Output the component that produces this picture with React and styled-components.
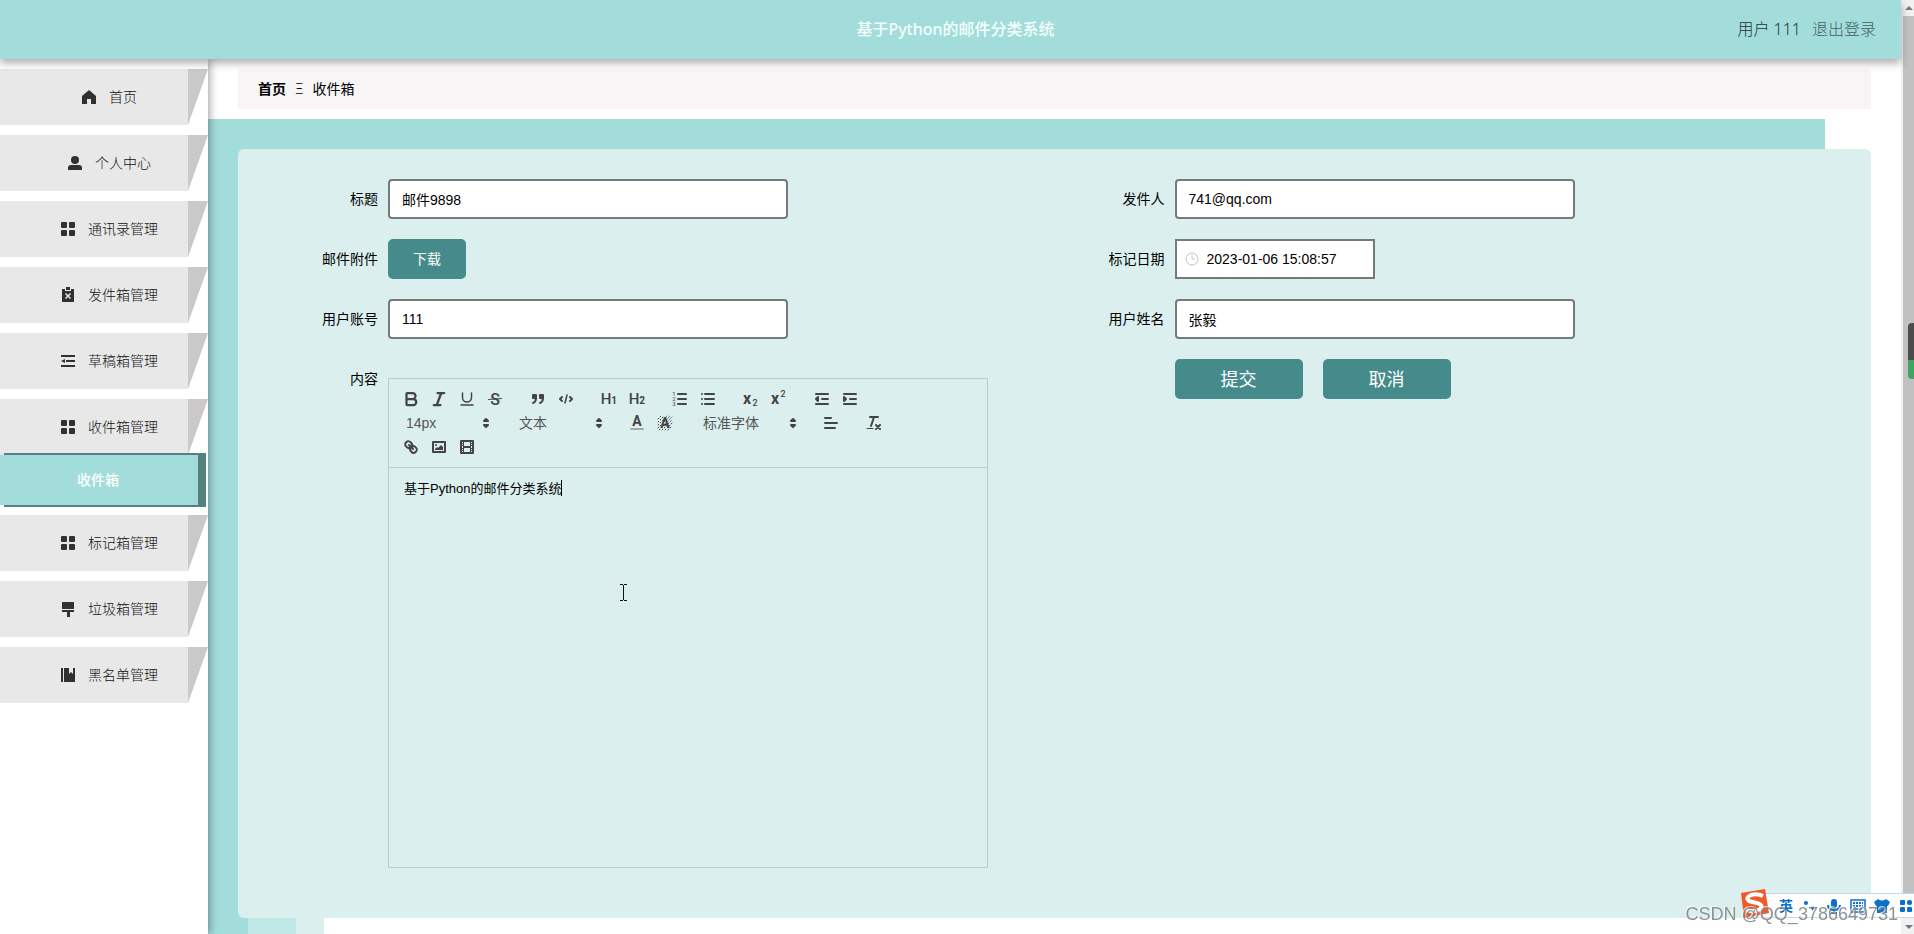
import styled, { createGlobalStyle, css } from "styled-components";
import { Bold, Italic, Underline } from "lucide-react";

const GlobalStyle = createGlobalStyle`
  * {
    box-sizing: border-box;
  }

  body {
    margin: 0;
    background: #fff;
    color: #000;
    font-family: "Noto Sans", "Noto Sans CJK SC", sans-serif;
    font-size: 14px;
    overflow: hidden;
  }

  button, input, select, textarea {
    font-family: "Liberation Sans", "Noto Sans CJK SC", sans-serif;
    font-size: 14px;
    color: #000;
  }
`;

const Page = styled.div`
  display: flex;
  min-height: 100vh;
`;

const Shell = styled.div`
  flex: 1;
  min-width: 0;
  display: flex;
  flex-direction: column;
`;

/* header */

const Header = styled.header`
  position: relative;
  z-index: 2;
  display: grid;
  grid-template-columns: 1fr auto 1fr;
  align-items: center;
  height: 59px;
  padding: 0 25px 3px;
  background: #a3dddb;
  box-shadow: 0 4px 8px rgba(60, 40, 50, 0.4);
`;

const Title = styled.h1`
  grid-column: 2;
  margin: 0;
  padding-left: 10px;
  font-size: 16px;
  font-weight: 500;
  color: #f4fffe;
`;

const UserBox = styled.div`
  display: flex;
  justify-content: flex-end;
  gap: 11px;
  font-size: 16px;
  font-weight: 300;
  color: #1d3332;
`;

const Logout = styled.a`
  color: #3f6061;
  text-decoration: none;
`;

/* sidebar */

const Body = styled.div`
  flex: 1;
  display: flex;
`;

const Sidebar = styled.nav`
  position: relative;
  z-index: 1;
  width: 208px;
  padding-top: 10px;
  background: #fff;
  box-shadow: 2px 0 8px rgba(0, 0, 0, 0.35);
`;

const Menu = styled.ul`
  display: flex;
  flex-direction: column;
  gap: 10px;
  margin: 0;
  padding: 0;
  list-style: none;
`;

const MenuLink = styled.a`
  display: flex;
  height: 56px;
  font-weight: 300;
  color: #111;
  text-decoration: none;

  &::after {
    content: "";
    width: 20px;
    background: #cac8c9;
    clip-path: polygon(0 0, 100% 0, 0 100%);
  }
`;

const MenuLabel = styled.span`
  flex: 1;
  display: flex;
  align-items: center;
  justify-content: center;
  gap: 11px;
  padding: 0 0 2px 29px;
  background: #e8e8e8;

  svg {
    width: 18px;
    height: 18px;
    margin-top: 2px;
    fill: #303133;
  }
`;

const SubLink = styled.a`
  position: relative;
  display: block;
  margin-right: 10px;
  padding-right: 2px;
  line-height: 50px;
  text-align: center;
  font-weight: 500;
  color: #fff;
  background: #a3dddb;
  box-shadow: 6px 0 0 2px #53837f;
  text-decoration: none;
`;

/* main */

const Main = styled.main`
  flex: 1;
  min-width: 0;
  display: flex;
  flex-direction: column;
  padding-top: 10px;
`;

const Breadcrumb = styled.div`
  display: flex;
  align-items: center;
  gap: 9px;
  height: 40px;
  margin: 0 30px 10px;
  padding: 0 20px 2px;
  background: #f7f5f6;

  a {
    color: #000;
    font-weight: 700;
    text-decoration: none;
  }
`;

const Separator = styled.span`
  font-weight: 300;
`;

const Stage = styled.div`
  padding: 30px 30px 0;
  background: linear-gradient(#a3dddb, #a3dddb) no-repeat left top / calc(100% - 76px) 100%;
`;

const Panel = styled.form`
  display: grid;
  grid-template-columns: 1fr 1fr;
  row-gap: 20px;
  align-items: start;
  padding: 30px 30px 50px;
  background: #dbf0ee;
  border-radius: 6px;
`;

const Stripes = styled.div`
  flex: 1;
  display: flex;
`;

const Stripe = styled.div`
  width: ${(props) => props.$width}px;
  background: ${(props) => props.$color};
`;

const Field = styled.div`
  display: flex;
  min-width: 0;
  padding-top: ${(props) => (props.$tall ? 19 : 0)}px;
`;

const labelStyles = css`
  flex: none;
  width: 120px;
  padding-right: 10px;
  line-height: ${(props) => (props.$short ? 2 : 40)}px;
  text-align: right;
`;

const Label = styled.label`
  ${labelStyles}
`;

const LabelText = styled.span`
  ${labelStyles}
`;

const Input = styled.input`
  width: 400px;
  height: 40px;
  padding: 0 12px;
  background: #fff;
  border: 2px solid #757b7b;
  border-radius: 4px;
  outline: none;
`;

const DateBox = styled.div`
  display: flex;
  align-items: center;
  gap: 6px;
  width: 200px;
  height: 40px;
  padding: 0 8px;
  background: #fff;
  border: 2px solid #757b7b;

  svg {
    flex: none;
    width: 14px;
    height: 14px;
    fill: none;
    stroke: #c0c4cc;
  }

  input {
    width: 100%;
    padding: 0 2px;
    border: none;
    outline: none;
    background: none;
  }
`;

const Button = styled.button`
  width: ${(props) => (props.$large ? 128 : 78)}px;
  height: 40px;
  padding: 0 0 2px;
  border: none;
  border-radius: 5px;
  background: #468b8b;
  color: #fff;
  font-size: ${(props) => (props.$large ? 18 : 14)}px;
`;

const Actions = styled.div`
  display: flex;
  gap: 20px;
  padding-left: 120px;
`;

/* rich text editor */

const Editor = styled.div`
  position: relative;
  width: 600px;
  border: 1px solid #b9cecc;
`;

const Toolbar = styled.div`
  display: flex;
  flex-wrap: wrap;
  padding: 8px;
  border-bottom: 1px solid #b9cecc;
`;

const Group = styled.div`
  display: flex;
  margin-right: 15px;
`;

const Tool = styled.button`
  width: 28px;
  height: 24px;
  padding: 3px 5px;
  border: none;
  background: none;

  svg {
    display: block;
    width: 18px;
    height: 18px;
    overflow: visible;
  }
`;

const Picker = styled.div`
  position: relative;
  width: ${(props) => props.$width}px;
  height: 24px;

  select {
    width: 100%;
    height: 24px;
    padding: 0 9px;
    border: none;
    outline: none;
    background: none;
    appearance: none;
    color: #555;
  }

  svg {
    position: absolute;
    top: 3px;
    right: 0;
    width: 18px;
    height: 18px;
    pointer-events: none;
  }
`;

const TextArea = styled.textarea`
  display: block;
  width: 100%;
  height: 399px;
  padding: 12px 15px;
  border: none;
  outline: none;
  resize: none;
  background: none;
  font-size: 13px;
  line-height: 18px;
`;

const Caret = styled.span`
  position: absolute;
  top: 101px;
  left: 172px;
  width: 1px;
  height: 16px;
  background: #000;
`;

const Pointer = styled.svg`
  position: absolute;
  top: 205px;
  left: 230px;
  width: 9px;
  height: 17px;
  fill: none;
  stroke: #111;
`;

/* scrollbar */

const ScrollTrack = styled.div`
  display: flex;
  flex-direction: column;
  align-items: flex-end;
  width: 13px;
  height: 100vh;
  background: #f1f1f1;

  svg {
    flex: none;
    width: 11px;
    height: 16px;
    fill: #777;
  }
`;

const Thumb = styled.div`
  flex: 1;
  width: 11px;
  background: #c1c1c1;
`;

const Gauge = styled.div`
  position: fixed;
  top: 323px;
  right: 0;
  width: 6px;
  height: 56px;
  border-radius: 4px 0 0 4px;
  background: linear-gradient(#4c4c4c 66%, #3fa564 66%);
`;

/* input method bar */

const ImeBar = styled.div`
  position: fixed;
  right: -4px;
  bottom: 16px;
  display: flex;
  align-items: center;
  height: 25px;
  padding-left: 12px;
  background: #fff;
  border: solid #bfd9ee;
  border-width: 1px 0;
  color: #0b6fce;
  font-size: 14px;
  font-weight: 700;

  span,
  svg {
    width: 24px;
    text-align: center;
  }

  span {
    padding-bottom: 2px;
  }

  svg {
    height: 16px;
    fill: #0b6fce;
  }
`;

const ImeLogo = styled.svg`
  position: fixed;
  right: 144px;
  bottom: 15px;
  width: 31px;
  height: 31px;
`;

const Watermark = styled.div`
  position: fixed;
  right: 16px;
  bottom: 9px;
  font-family: "Liberation Sans", sans-serif;
  font-size: 18px;
  line-height: 22px;
  color: rgba(130, 135, 135, 0.9);
  text-shadow: -1px -1px 0 rgba(255, 255, 255, 0.7);
`;

const icons = {
  home: <path d="M9 2 16 8v8h-5v-5H7v5H2V8z" />,
  user: (
    <>
      <circle cx="9" cy="6" r="4" />
      <path d="M2 16v-2q0-3 3-3h8q3 0 3 3v2z" />
    </>
  ),
  grid: (
    <>
      <rect x="2" y="2" width="6" height="6" rx="1" />
      <rect x="10" y="2" width="6" height="6" rx="1" />
      <rect x="2" y="10" width="6" height="6" rx="1" />
      <rect x="10" y="10" width="6" height="6" rx="1" />
    </>
  ),
  clipboard: (
    <>
      <path d="M3 3h3v2h6V3h3v13H3z" />
      <path d="M7 1h4v3H7z" />
      <path d="m6.500 7.500 5 5m0-5-5 5" stroke="#e8e8e8" strokeWidth="1.500" />
    </>
  ),
  fold: (
    <>
      <path d="M2 3h14v2H2zM7 8h9v2H7zM2 13h14v2H2z" />
      <path d="M2 9l4-2v4z" />
    </>
  ),
  brush: <path d="M3 2h12v7H3zM3 10h12v2h-4v5H8v-5H3z" />,
  notebook: <path d="M2 2h2v14H2zM5 2h5v6l2-2 2 2V2h2v14H5z" />,
};

const menu = [
  { name: "首页", icon: "home" },
  { name: "个人中心", icon: "user" },
  { name: "通讯录管理", icon: "grid" },
  { name: "发件箱管理", icon: "clipboard" },
  { name: "草稿箱管理", icon: "fold" },
  { name: "收件箱管理", icon: "grid", child: "收件箱" },
  { name: "标记箱管理", icon: "grid" },
  { name: "垃圾箱管理", icon: "brush" },
  { name: "黑名单管理", icon: "notebook" },
];

function Glyph({ children }) {
  return (
    <svg
      viewBox="0 0 18 18"
      fill="none"
      stroke="#444"
      strokeWidth="2"
      strokeLinecap="round"
      strokeLinejoin="round"
    >
      {children}
    </svg>
  );
}

function Letter({ x = 9, y = 14, size = 14, weight = 700, children }) {
  return (
    <text
      x={x}
      y={y}
      fontSize={size}
      fontWeight={weight}
      textAnchor="middle"
      fill="#444"
      stroke="none"
      fontFamily="Roboto, sans-serif"
    >
      {children}
    </text>
  );
}

function Select({ label, value, width }) {
  return (
    <Picker $width={width}>
      <select aria-label={label} defaultValue={value}>
        <option>{value}</option>
      </select>
      <Glyph>
        <path d="M7 11l2 2 2-2zM7 7l2-2 2 2z" />
      </Glyph>
    </Picker>
  );
}

function ToolButton({ label, children }) {
  return (
    <Tool type="button" aria-label={label}>
      {children}
    </Tool>
  );
}

function EditorToolbar() {
  return (
    <Toolbar>
      <Group>
        <ToolButton label="粗体">
          <Bold color="#444" strokeWidth={3} />
        </ToolButton>
        <ToolButton label="斜体">
          <Italic color="#444" strokeWidth={3} />
        </ToolButton>
        <ToolButton label="下划线">
          <Underline color="#444" strokeWidth={2} />
        </ToolButton>
        <ToolButton label="删除线">
          <Glyph>
            <Letter size={16} weight={500} y={15}>S</Letter>
            <path d="M2.500 9.500l13-1" strokeWidth="1" />
          </Glyph>
        </ToolButton>
      </Group>
      <Group>
        <ToolButton label="引用">
          <Glyph>
            <g fill="#444">
              <rect x="4" y="5" width="3" height="3" />
              <rect x="11" y="5" width="3" height="3" />
            </g>
            <path d="M7 8c0 4-3 5-3 5M14 8c0 4-3 5-3 5" />
          </Glyph>
        </ToolButton>
        <ToolButton label="代码">
          <Glyph>
            <path d="M5 7 3 9l2 2M13 7l2 2-2 2" />
            <path d="M10 5 8 13" strokeWidth="1.500" />
          </Glyph>
        </ToolButton>
      </Group>
      <Group>
        <ToolButton label="标题一">
          <Glyph>
            <Letter x={6} size={15} weight={500}>H</Letter>
            <Letter x={14} size={10}>1</Letter>
          </Glyph>
        </ToolButton>
        <ToolButton label="标题二">
          <Glyph>
            <Letter x={6} size={15} weight={500}>H</Letter>
            <Letter x={14} size={10}>2</Letter>
          </Glyph>
        </ToolButton>
      </Group>
      <Group>
        <ToolButton label="有序列表">
          <Glyph>
            <path d="M7 4h8M7 9h8M7 14h8" />
            <Letter x={3} y={6} size={6} weight={400}>1</Letter>
            <Letter x={3} y={11} size={6} weight={400}>2</Letter>
            <Letter x={3} y={16} size={6} weight={400}>3</Letter>
          </Glyph>
        </ToolButton>
        <ToolButton label="无序列表">
          <Glyph>
            <path d="M6 4h9M6 9h9M6 14h9M3 4h0M3 9h0M3 14h0" />
          </Glyph>
        </ToolButton>
      </Group>
      <Group>
        <ToolButton label="下标">
          <Glyph>
            <Letter x={5} y={14} size={16}>x</Letter>
            <Letter x={13} y={16} size={9} weight={500}>2</Letter>
          </Glyph>
        </ToolButton>
        <ToolButton label="上标">
          <Glyph>
            <Letter x={5} y={14} size={16}>x</Letter>
            <Letter x={13} y={7} size={9} weight={500}>2</Letter>
          </Glyph>
        </ToolButton>
      </Group>
      <Group>
        <ToolButton label="减少缩进">
          <Glyph>
            <path d="M3 4h12M9 9h6M3 14h12" />
            <path d="M5 7v4L3 9z" fill="#444" />
          </Glyph>
        </ToolButton>
        <ToolButton label="增加缩进">
          <Glyph>
            <path d="M3 4h12M9 9h6M3 14h12" />
            <path d="M3 7v4l2-2z" fill="#444" />
          </Glyph>
        </ToolButton>
      </Group>
      <Group>
        <Select label="字号" value="14px" width={98} />
      </Group>
      <Group>
        <Select label="段落" value="文本" width={98} />
      </Group>
      <Group>
        <ToolButton label="文字颜色">
          <Glyph>
            <Letter y={12} size={14}>A</Letter>
            <path d="M3 15h12" opacity="0.4" />
          </Glyph>
        </ToolButton>
        <ToolButton label="背景颜色">
          <Glyph>
            <path
              d="M2 5l3-3M2 8l6-6M2 11l9-9M2 14l12-12M3 16l13-13M6 16l10-10M9 16l7-7M12 16l4-4"
              strokeWidth="1"
              strokeDasharray="1 2"
            />
            <Letter y={14}>A</Letter>
          </Glyph>
        </ToolButton>
      </Group>
      <Group>
        <Select label="字体" value="标准字体" width={108} />
      </Group>
      <Group>
        <ToolButton label="对齐">
          <Glyph>
            <path d="M3 4h6M3 9h12M3 14h10" />
          </Glyph>
        </ToolButton>
      </Group>
      <Group>
        <ToolButton label="清除格式">
          <Glyph>
            <path d="M5 3h8M6 12l3-9M11 11l4 4M15 11l-4 4" />
            <path d="M2 14.500h6" strokeWidth="1" />
          </Glyph>
        </ToolButton>
      </Group>
      <Group>
        <ToolButton label="链接">
          <Glyph>
            <path d="M7 7l4 4" />
            <path d="M8.900 4.577a3.476 3.476 0 0 1 .36 4.679A3.476 3.476 0 0 1 4.577 8.900C3.185 7.500 2.035 6.400 4.217 4.217S7.500 3.185 8.900 4.577Z" />
            <path d="M13.423 9.100a3.476 3.476 0 0 0-4.679-.36 3.476 3.476 0 0 0 .36 4.679c1.392 1.392 2.500 2.542 4.679.36S14.815 10.500 13.423 9.100Z" />
          </Glyph>
        </ToolButton>
        <ToolButton label="图片">
          <Glyph>
            <rect x="3" y="4" width="12" height="10" />
            <g fill="#444" stroke="none">
              <circle cx="6" cy="7" r="1" />
              <path d="M5 12v-1l2-2 1 1 3-3 2 2v3z" />
            </g>
          </Glyph>
        </ToolButton>
        <ToolButton label="视频">
          <Glyph>
            <rect x="3" y="3" width="12" height="12" />
            <g fill="#444" stroke="none">
              <path d="M5 3h1v12H5zM12 3h1v12h-1zM5 8h8v2H5z" />
              <path d="M3 5h3v1H3zM3 7h3v1H3zM3 10h3v1H3zM3 12h3v1H3zM12 5h3v1h-3zM12 7h3v1h-3zM12 10h3v1h-3zM12 12h3v1h-3z" />
            </g>
          </Glyph>
        </ToolButton>
      </Group>
    </Toolbar>
  );
}

function TextField({ id, label, value }) {
  return (
    <Field>
      <Label htmlFor={id}>{label}</Label>
      <Input id={id} defaultValue={value} />
    </Field>
  );
}

function MailForm() {
  return (
    <Panel>
      <TextField id="subject" label="标题" value="邮件9898" />
      <TextField id="sender" label="发件人" value="741@qq.com" />
      <Field>
        <LabelText>邮件附件</LabelText>
        <Button type="button">下载</Button>
      </Field>
      <Field>
        <Label htmlFor="date">标记日期</Label>
        <DateBox>
          <svg viewBox="0 0 14 14">
            <circle cx="7" cy="7" r="6" />
            <path d="M7 3v4h3" />
          </svg>
          <input id="date" defaultValue="2023-01-06 15:08:57" />
        </DateBox>
      </Field>
      <TextField id="account" label="用户账号" value="111" />
      <TextField id="username" label="用户姓名" value="张毅" />
      <Field $tall>
        <Label htmlFor="content" $short>
          内容
        </Label>
        <Editor>
          <EditorToolbar />
          <TextArea id="content" defaultValue="基于Python的邮件分类系统" />
          <Caret />
          <Pointer viewBox="0 0 9 17">
            <path d="M1 .5h3M5 .5h3M4.500 1v15M1 16.500h3M5 16.500h3" />
          </Pointer>
        </Editor>
      </Field>
      <Actions>
        <Button type="button" $large>
          提交
        </Button>
        <Button type="button" $large>
          取消
        </Button>
      </Actions>
    </Panel>
  );
}

function Ime() {
  return (
    <>
      <ImeBar>
        <span>英</span>
        <svg viewBox="0 0 24 16">
          <circle cx="8" cy="5" r="2" />
          <path d="M13 8h3v3l-2 2v-2h-1z" />
        </svg>
        <svg viewBox="0 0 24 16">
          <rect x="9" y="1" width="6" height="9" rx="3" />
          <path d="M6 7q0 5 6 5t6-5M12 12v3M9 15h6" fill="none" stroke="#0b6fce" strokeWidth="2" />
        </svg>
        <svg viewBox="0 0 24 16">
          <rect x="5" y="2" width="14" height="12" fill="none" stroke="#0b6fce" strokeWidth="1.500" />
          <path d="M7 5h10M7 8h10" fill="none" stroke="#0b6fce" strokeWidth="2" strokeDasharray="2 1" />
          <path d="M8 11h8" fill="none" stroke="#0b6fce" strokeWidth="1.500" />
        </svg>
        <svg viewBox="0 0 24 16">
          <path d="M8 1q4 3 8 0l4 3-2 4h-1v7H7V8H6L4 4z" />
        </svg>
        <svg viewBox="0 0 24 16">
          <rect x="6" y="2" width="5" height="5" rx="1" />
          <rect x="13" y="2" width="5" height="5" rx="2" />
          <rect x="6" y="9" width="5" height="5" rx="1" />
          <rect x="13" y="9" width="5" height="5" rx="1" />
        </svg>
      </ImeBar>
      <ImeLogo viewBox="0 0 31 31">
        <path d="M2 5 26 1l4 24-25 5z" fill="#f0592b" />
        <path
          d="M24 8q-6-3-12-1-6 3-2 6 3 1 8 2 7 2 3 6-5 4-14 1"
          fill="none"
          stroke="#fff"
          strokeWidth="4"
        />
      </ImeLogo>
      <Watermark>CSDN @QQ_3786649731</Watermark>
    </>
  );
}

function App() {
  return (
    <Page>
      <GlobalStyle />
      <Shell>
        <Header>
          <Title>基于Python的邮件分类系统</Title>
          <UserBox>
            <span>用户 111</span>
            <Logout href="#">退出登录</Logout>
          </UserBox>
        </Header>
        <Body>
          <Sidebar>
            <Menu>
              {menu.map((item) => (
                <li key={item.name}>
                  <MenuLink href="#">
                    <MenuLabel>
                      <svg viewBox="0 0 18 18">{icons[item.icon]}</svg>
                      {item.name}
                    </MenuLabel>
                  </MenuLink>
                  {item.child && <SubLink href="#">{item.child}</SubLink>}
                </li>
              ))}
            </Menu>
          </Sidebar>
          <Main>
            <Breadcrumb>
              <a href="#">首页</a>
              <Separator>Ξ</Separator>
              <span>收件箱</span>
            </Breadcrumb>
            <Stage>
              <MailForm />
            </Stage>
            <Stripes>
              <Stripe $width={40} $color="#a3dddb" />
              <Stripe $width={48} $color="#bfe7e5" />
              <Stripe $width={28} $color="#dbf0ee" />
            </Stripes>
          </Main>
        </Body>
      </Shell>
      <ScrollTrack>
        <svg viewBox="0 0 11 16">
          <path d="M2 10l4-4 4 4z" />
        </svg>
        <Thumb />
        <svg viewBox="0 0 11 16">
          <path d="M2 7l4 4 4-4z" />
        </svg>
      </ScrollTrack>
      <Gauge />
      <Ime />
    </Page>
  );
}

export default App;
